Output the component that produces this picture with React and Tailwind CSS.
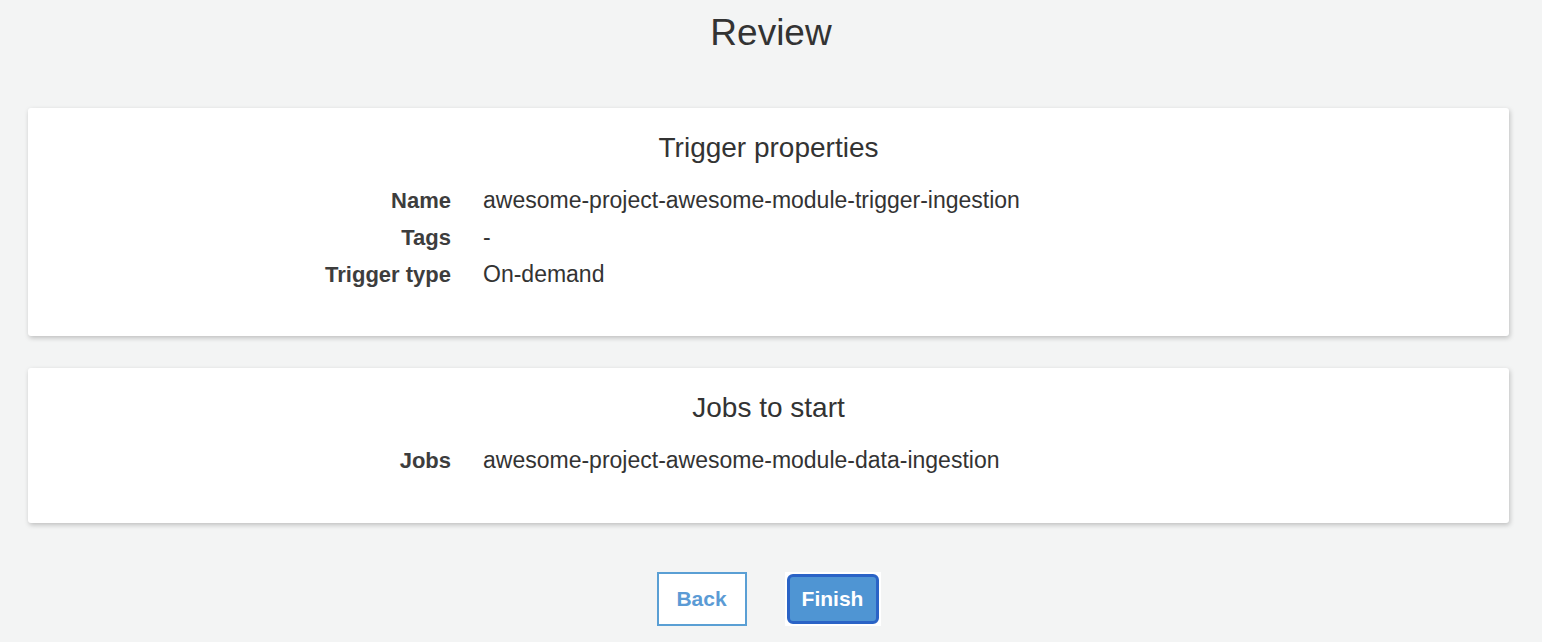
export default function App() {
  const font = { fontFamily: '"Liberation Sans", Arial, Helvetica, sans-serif' };
  const Row = ({ label, value }) => (
    <div className="flex h-[37px] items-center">
      <div className="w-[423px] shrink-0 text-right text-[22px] font-bold text-[#3d3d3d]">{label}</div>
      <div className="pl-[32px] text-[23px] text-[#333]">{value}</div>
    </div>
  );
  const Card = ({ title, children, last }) => (
    <div className={`rounded-[3px] bg-white pt-[23px] shadow-[1px_2px_5px_rgba(0,0,0,0.22)] ${last ? "pb-[44px]" : "pb-[43px]"}`}>
      <div className="h-[34px] text-center text-[28px] leading-[34px] text-[#333]">{title}</div>
      <div className="mt-[17px]">{children}</div>
    </div>
  );
  return (
    <div style={font} className="min-h-[642px] w-full bg-[#f3f4f4] px-[28px] pt-[11px]">
      <div className="text-center text-[37px] leading-[44px] text-[#333]">Review</div>
      <div className="mt-[53px] pr-[5px]">
        <Card title="Trigger properties">
          <Row label="Name" value="awesome-project-awesome-module-trigger-ingestion" />
          <Row label="Tags" value="-" />
          <Row label="Trigger type" value="On-demand" />
        </Card>
        <div className="h-[32px]" />
        <Card title="Jobs to start" last>
          <Row label="Jobs" value="awesome-project-awesome-module-data-ingestion" />
        </Card>
      </div>
      <div className="mt-[49px] flex justify-center gap-[38px] pr-[5px]">
        <button className="flex h-[54px] w-[90px] items-center justify-center border-2 border-[#5a9fd4] bg-white text-[21px] font-bold text-[#5b9bd5]">
          Back
        </button>
        <span className="flex h-[54px] w-[96px] bg-white p-[2px]">
          <button className="flex h-full w-full items-center justify-center rounded-[6px] border-[3px] border-[#2a63c6] bg-[#4f95d3] text-[21px] font-bold text-white">
            Finish
          </button>
        </span>
      </div>
    </div>
  );
}
